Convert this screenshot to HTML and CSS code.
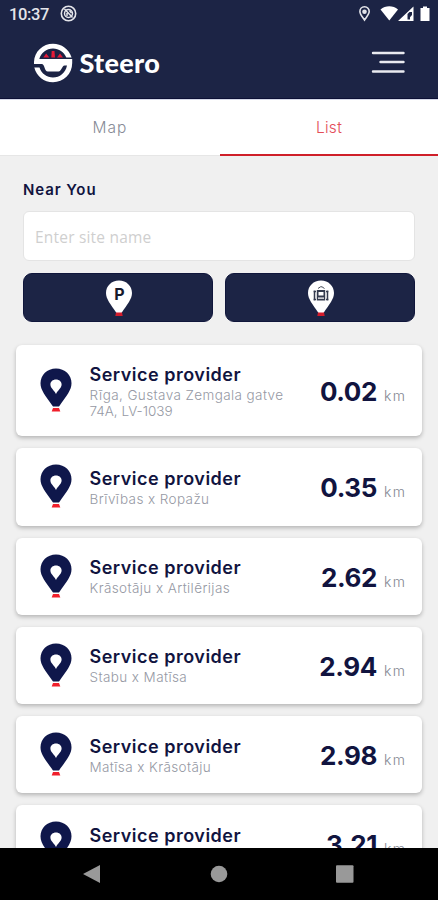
FILE: index.html
```html
<!DOCTYPE html>
<html lang="en">
<head>
<meta charset="utf-8">
<title>Steero</title>
<link rel="stylesheet" href="styles.css">
</head>
<body>
<svg class="defs" width="0" height="0">
  <symbol id="pin" viewBox="0 0 32 45">
    <path fill-rule="evenodd" fill="#0f174b" d="M16 .5C7 .5.5 7 .5 15.200C.5 22 5 27 13 38.500H19C27 27 31.500 22 31.500 15.200C31.500 7 25 .5 16 .5ZM16 11.500C19.300 11.500 21.600 13.700 21.600 16.500C21.600 20 18 22 16 26C14 22 10.400 20 10.400 16.500C10.400 13.700 12.700 11.500 16 11.500Z"/>
    <path fill="#f01f2b" d="M13 40H19L20.300 43.500H11.700Z"/>
  </symbol>
  <symbol id="pin-white" viewBox="0 0 28 37">
    <path fill="#fff" d="M14 .5C6.500 .5 1 6 1 13C1 19 5.500 24 11.500 33H16.500C22.500 24 27 19 27 13C27 6 21.500 .5 14 .5Z"/>
    <path fill="#d31c2c" d="M11 32.500H17L17.700 36H10.300Z"/>
  </symbol>
</svg>
<header class="header">
  <div class="status">
    <span class="time">10:37</span>
    <svg class="sync" width="17" height="17" viewBox="0 0 17 17" fill="none" stroke="#e4e5ea">
      <circle cx="8.500" cy="8.500" r="7.200" stroke-width="1.600"/>
      <circle cx="8.500" cy="8.500" r="4" stroke-width="1.500"/>
      <path d="M4.500 4L12.500 12.500M7 8V11M9.500 5.500L11.500 8" stroke-width="1.500"/>
    </svg>
    <svg class="signals" width="74" height="18" viewBox="0 0 74 18">
      <path fill="none" stroke="#e4e5ea" stroke-width="1.600" d="M5.500 1.800C2.500 1.800 .9 4 .9 6.600C.9 9.500 3.500 12 5.500 15C7.500 12 10.200 9.500 10.200 6.600C10.200 4 8.500 1.800 5.500 1.800Z"/>
      <circle cx="5.500" cy="6.700" r="2.300" fill="#e4e5ea"/>
      <path fill="#fff" d="M21.500 4.500C26.500 .3 34 .3 39 4.500L30.300 15.500Z"/>
      <path fill="#fff" fill-rule="evenodd" d="M39 16L54.500 1.500V16ZM48.500 14.500H51V12.200L53 10V7H50.500L48.500 9Z"/>
      <path fill="#fff" d="M64 1.500H68V3H70.500V16H61.500V3H64Z"/>
    </svg>
  </div>
  <div class="brandbar">
    <svg class="logo" width="40" height="40" viewBox="0 0 40 40">
      <path fill="#fff" d="M1 19C1.300 8.500 10 .8 20 .8C28.500 .8 36 6 38.600 14.500H33.300C31 9 26 5.500 20 5.500C13.400 5.500 8 9.800 6.300 16H39.200V20C39.200 31 30.500 39.200 20 39.200C11 39.200 3.500 33.500 1.300 24.500H6.500C8.500 30.700 14 34.500 20 34.500C26.800 34.500 32.500 30 34 22.500H31.500C29 22.500 28.500 28.500 25.500 28.500H14.800C11.500 28.500 12 22 9 21H1Z"/>
      <path fill="#e41b38" d="M10.300 14.500L13.200 10.500L16.300 14.500ZM18.300 14.500L18.700 8H21.500L22 14.500ZM24 14.500L27 10.500L30 14.500Z"/>
    </svg>
    <span class="wordmark">Steero</span>
    <svg class="menu" width="36" height="26" viewBox="0 0 36 26" stroke="#e9eaf0" stroke-width="2.400" stroke-linecap="round">
      <path d="M2 3H32.500M9.500 12H32.500M2 21.500H32.500"/>
    </svg>
  </div>
</header>
<nav class="tabs">
  <div class="tab"><span>Map</span></div>
  <div class="tab active"><span>List</span></div>
</nav>
<main class="content">
  <h1 class="heading">Near You</h1>
  <div class="search">Enter site name</div>
  <div class="filters">
    <div class="filter">
      <svg width="28" height="37" viewBox="0 0 28 37"><use href="#pin-white"/><text class="p" x="14.500" y="19.500" text-anchor="middle">P</text></svg>
    </div>
    <div class="filter">
      <svg width="28" height="37" viewBox="0 0 28 37"><use href="#pin-white"/>
        <path fill="none" stroke="#454b59" stroke-width="1" d="M11 8.500L13.500 6.800H15L17.500 8.500"/>
        <path fill="#343b4e" fill-rule="evenodd" d="M9.800 10H18.200V20.500H9.800ZM11.500 12V15.500H16.500V12ZM11 17.500V18.800H17V17.500Z"/>
        <path stroke="#343b4e" stroke-width="1.500" d="M7.500 10.500V20.500M20.500 10.500V20.500M6.500 11.500H9M19 11.500H21.500M6.500 19.500H9M19 19.500H21.500"/>
      </svg>
    </div>
  </div>
  <div class="list">
    <article class="card tall">
      <svg class="pin"><use href="#pin"/></svg>
      <div class="info"><h2>Service provider</h2><p>Rīga, Gustava Zemgala gatve<br><span class="tight">74A, LV-1039</span></p></div>
      <div class="dist"><b>0.02</b><small>km</small></div>
    </article>
    <article class="card">
      <svg class="pin"><use href="#pin"/></svg>
      <div class="info"><h2>Service provider</h2><p>Brīvības x Ropažu</p></div>
      <div class="dist"><b>0.35</b><small>km</small></div>
    </article>
    <article class="card">
      <svg class="pin"><use href="#pin"/></svg>
      <div class="info"><h2>Service provider</h2><p>Krāsotāju x Artilērijas</p></div>
      <div class="dist"><b>2.62</b><small>km</small></div>
    </article>
    <article class="card">
      <svg class="pin"><use href="#pin"/></svg>
      <div class="info"><h2>Service provider</h2><p>Stabu x Matīsa</p></div>
      <div class="dist"><b>2.94</b><small>km</small></div>
    </article>
    <article class="card">
      <svg class="pin"><use href="#pin"/></svg>
      <div class="info"><h2>Service provider</h2><p>Matīsa x Krāsotāju</p></div>
      <div class="dist"><b>2.98</b><small>km</small></div>
    </article>
    <article class="card">
      <svg class="pin"><use href="#pin"/></svg>
      <div class="info"><h2>Service provider</h2></div>
      <div class="dist"><b>3.21</b><small>km</small></div>
    </article>
  </div>
</main>
<footer class="navbar">
  <svg width="18" height="20" viewBox="0 0 18 20"><path fill="#999" d="M0 10L17 1V19Z"/></svg>
  <svg width="18" height="20" viewBox="0 0 18 20"><circle cx="9" cy="10" r="8.300" fill="#999"/></svg>
  <svg width="18" height="20" viewBox="0 0 18 20"><rect y="1.300" width="17.500" height="17.500" rx="1" fill="#999"/></svg>
</footer>
</body>
</html>
```
FILE: styles.css
```css
* { box-sizing: border-box; }
body {
  margin: 0;
  width: 438px;
  height: 900px;
  display: flex;
  flex-direction: column;
  overflow: hidden;
  background: #f0f0f0;
  font-family: Inter, "Open Sans", sans-serif;
  color: #11143f;
}
.defs { position: absolute; }
svg { display: block; flex: none; }
h1, h2, p { margin: 0; }
.header { height: 99px; flex: none; background: #1c2445; border-bottom: 1px solid #0c1035; }
.status { height: 30px; display: flex; padding: 5px 5px 0 9px; }
.time { width: 51px; font: 500 16.5px/20px Roboto, sans-serif; color: #e4e5ea; letter-spacing: -.4px; }
.signals { margin-left: auto; }
.brandbar { display: flex; padding: 13px 31px 0 33px; }
.wordmark { margin: 4px 0 0 6.5px; font: 900 27px/32px Lato, sans-serif; color: #fff; letter-spacing: .3px; }
.menu { margin: 7px 0 0 auto; }
.tabs { height: 57px; flex: none; display: flex; background: #fff; border-top: 1px solid #d5d9e8; }
.tab { width: 220px; display: flex; justify-content: center; padding-top: 18px; font-size: 15.5px; line-height: 20px; color: #878b96; border-bottom: 1px solid #e6e6e6; letter-spacing: 1.1px; font-weight: 300; }
.active { width: 218px; color: #e34d58; border-bottom: 2px solid #cf1f29; letter-spacing: .3px; }
.content { height: 692px; flex: none; padding: 24px 16px 0; overflow: hidden; }
.heading { margin-left: 7px; height: 31px; font-size: 15px; line-height: 19px; font-weight: 600; letter-spacing: .9px; }
.search { height: 50px; margin: 0 7px; padding: 0 11px; border: 1px solid #e4e4e4; border-radius: 6px; background: #fff; font: 15.500px/50px "Open Sans", sans-serif; letter-spacing: .2px; color: #cfcfcf; }
.filters { display: flex; gap: 12px; margin: 12px 7px 0; }
.filter { height: 49px; flex: 1; display: flex; justify-content: center; padding-top: 6px; border-radius: 9px; background: #1c2445; border: 1px solid #10163b; }
.filter svg { margin-left: 1px; }
.p { font: 700 16px Inter, sans-serif; fill: #171a2b; }
.list { display: flex; flex-direction: column; gap: 12px; margin-top: 22.750px; }
.card { height: 77.250px; flex: none; display: flex; align-items: center; background: #fff; border-radius: 6px; padding: 0 17px 0 24px; box-shadow: 0 2px 4px rgba(0,0,0,.25); }
.tall { height: 91.500px; }
.pin { width: 32px; height: 45px; }
.info { margin-left: 17.500px; align-self: flex-start; padding-top: 19.5px; width: 215px; white-space: nowrap; }
h2 { font-size: 18px; line-height: 22px; font-weight: 600; letter-spacing: .5px; }
p { font-size: 13.500px; line-height: 16px; margin-top: 1px; color: #9699a4; font-weight: 300; letter-spacing: .4px; }
.tight { letter-spacing: 0; }
.dist { margin: 3px 0 0 auto; display: flex; align-items: baseline; }
.dist b { font-size: 26px; line-height: 32px; font-weight: 700; letter-spacing: -.4px; }
.dist small { margin-left: 7px; font-size: 14px; color: #858893; font-weight: 300; letter-spacing: 1.4px; margin-right: -1.4px; }
.navbar { height: 52px; flex: none; background: #000; display: flex; justify-content: space-between; padding: 16px 84px 0 83px; }
```
